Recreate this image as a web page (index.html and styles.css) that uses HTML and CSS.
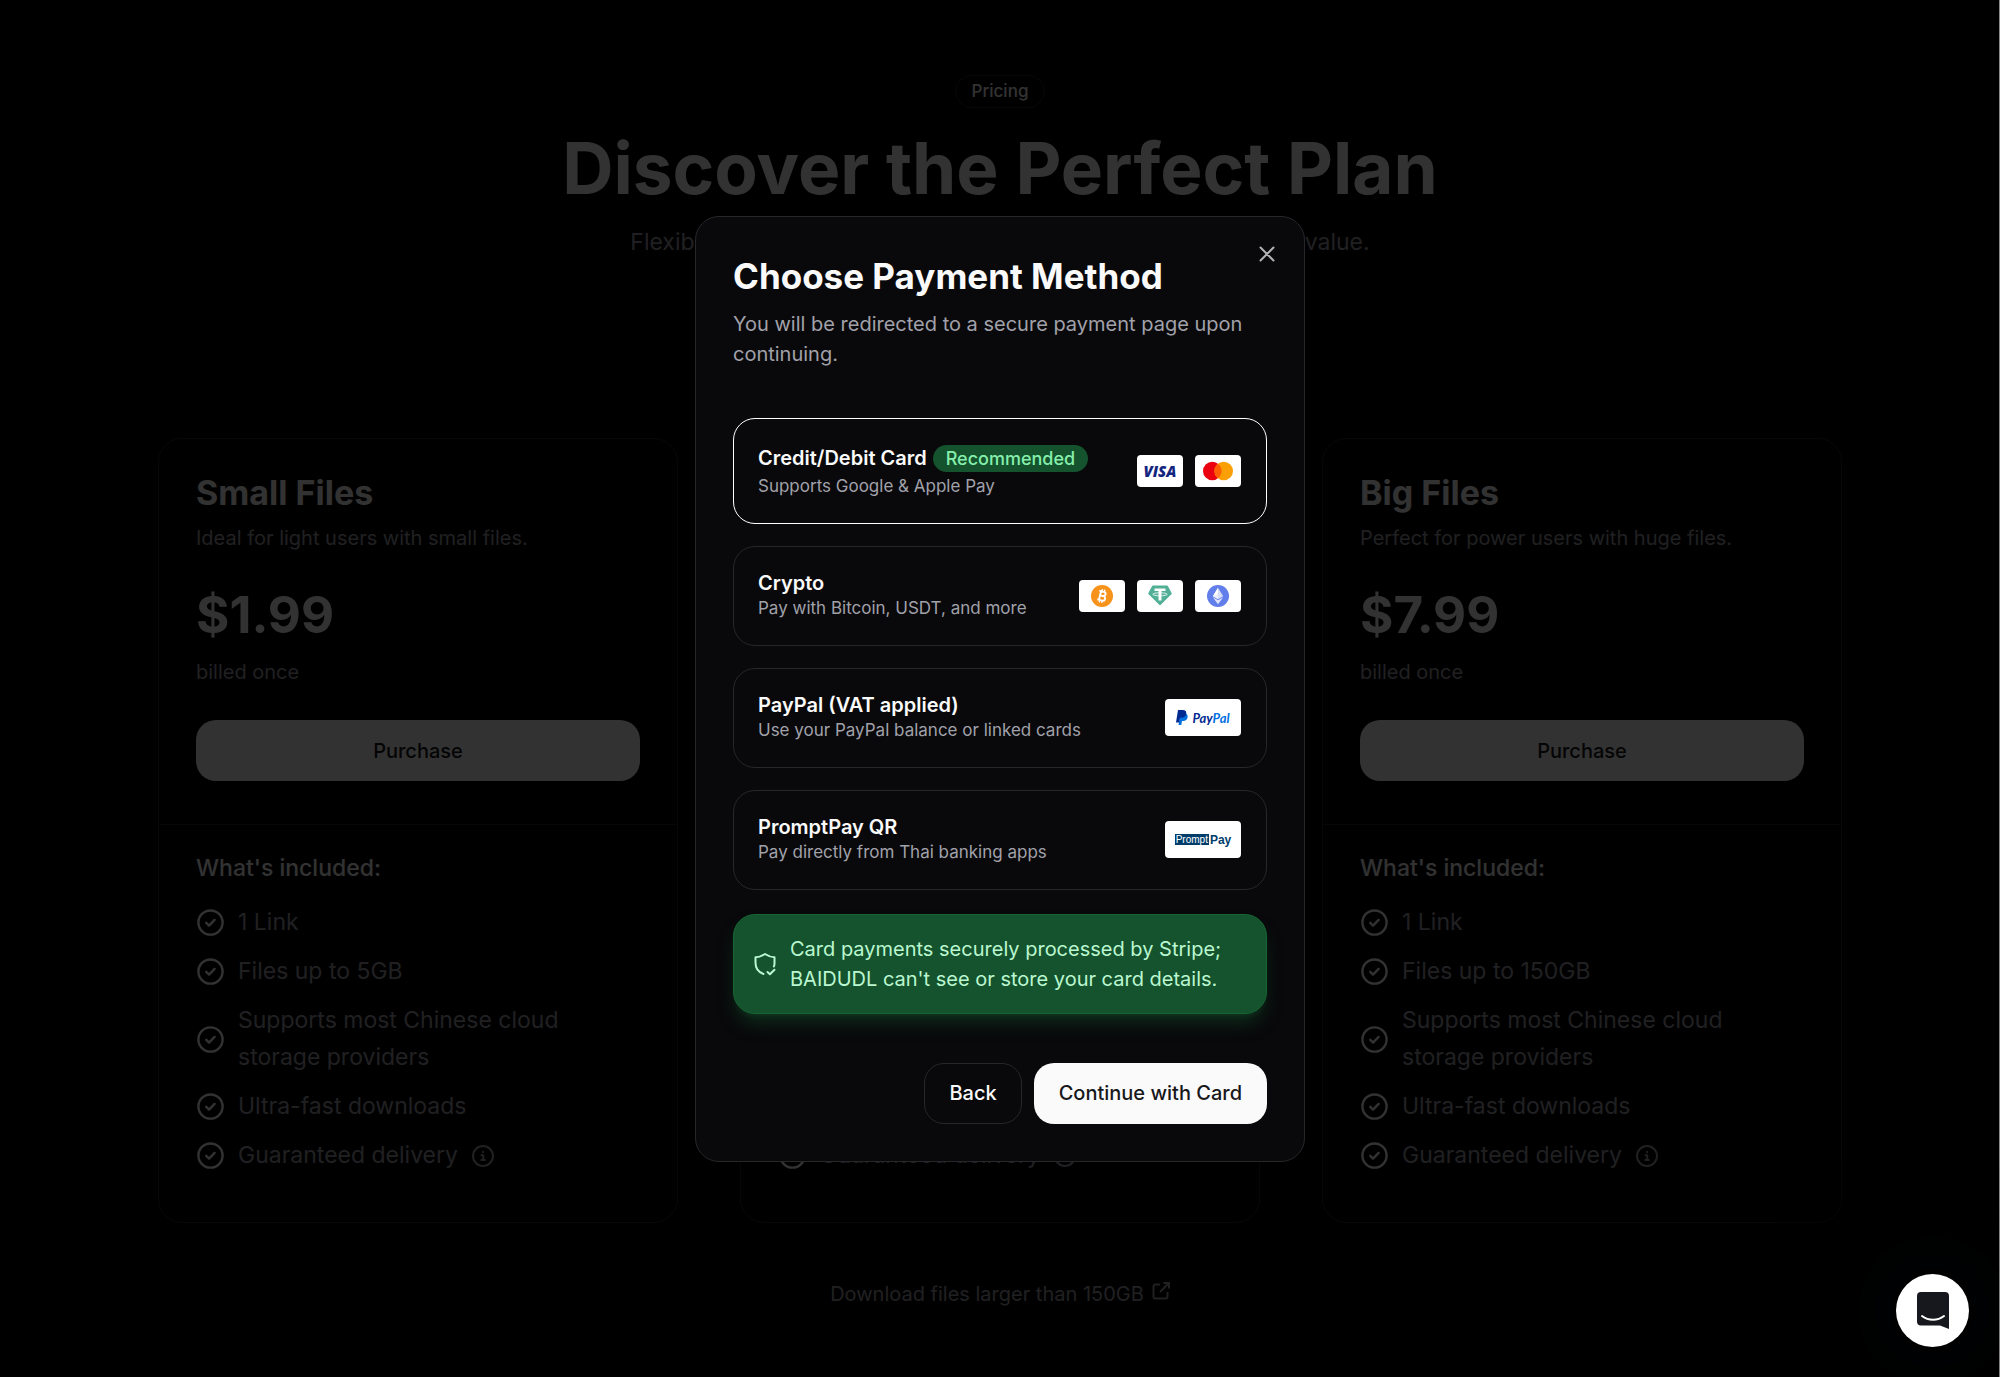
FILE: index.html
```html
<!DOCTYPE html>
<html lang="en">
<head>
  <meta charset="UTF-8"/>
  <meta name="viewport" content="width=device-width, initial-scale=1.0"/>
  <title>BAIDUDL – Pricing</title>
  <link rel="stylesheet" href="styles.css">
</head>

<body>
<!-- Shared icons -->
<svg class="sprite" aria-hidden="true">
  <symbol id="icon-check" viewBox="0 0 24 24">
    <circle cx="12" cy="12" r="10"/>
    <path d="M8.5 12.3l2.3 2.2 4.6-4.6"/>
  </symbol>
  <symbol id="icon-info" viewBox="0 0 24 24">
    <circle cx="12" cy="12" r="10"/>
    <path d="M10.5 11.2h1.7V16M10.3 16h3.6M12 7.8v.4"/>
  </symbol>
</svg>

<main class="pricing">
  <header class="intro">
    <span class="pill">Pricing</span>
    <h1>Discover the Perfect Plan</h1>
    <p>Flexible pricing plans designed to meet your needs with great value.</p>
  </header>

  <div class="plans">
    <section class="plan">
      <div class="plan-top">
        <h2>Small Files</h2>
        <p class="plan-desc">Ideal for light users with small files.</p>
        <p class="price">$1.99</p>
        <p class="billing">billed once</p>
        <button class="btn btn-primary" type="button">Purchase</button>
      </div>
      <div class="plan-features">
        <h3>What's included:</h3>
        <ul>
          <li><svg class="check"><use href="#icon-check"/></svg>1 Link</li>
          <li><svg class="check"><use href="#icon-check"/></svg>Files up to 5GB</li>
          <li><svg class="check"><use href="#icon-check"/></svg>Supports most Chinese cloud storage providers</li>
          <li><svg class="check"><use href="#icon-check"/></svg>Ultra-fast downloads</li>
          <li><svg class="check"><use href="#icon-check"/></svg>Guaranteed delivery<svg class="info"><use href="#icon-info"/></svg></li>
        </ul>
      </div>
    </section>

    <section class="plan">
      <div class="plan-top">
        <h2>Medium Files</h2>
        <p class="plan-desc">Great for regular users.</p>
        <p class="price">$3.99</p>
        <p class="billing">billed once</p>
        <button class="btn btn-primary" type="button">Purchase</button>
      </div>
      <div class="plan-features">
        <h3>What's included:</h3>
        <ul>
          <li><svg class="check"><use href="#icon-check"/></svg>1 Link</li>
          <li><svg class="check"><use href="#icon-check"/></svg>Files up to 50GB</li>
          <li><svg class="check"><use href="#icon-check"/></svg>Supports most Chinese cloud storage providers</li>
          <li><svg class="check"><use href="#icon-check"/></svg>Ultra-fast downloads</li>
          <li><svg class="check"><use href="#icon-check"/></svg>Guaranteed delivery<svg class="info"><use href="#icon-info"/></svg></li>
        </ul>
      </div>
    </section>

    <section class="plan">
      <div class="plan-top">
        <h2>Big Files</h2>
        <p class="plan-desc">Perfect for power users with huge files.</p>
        <p class="price">$7.99</p>
        <p class="billing">billed once</p>
        <button class="btn btn-primary" type="button">Purchase</button>
      </div>
      <div class="plan-features">
        <h3>What's included:</h3>
        <ul>
          <li><svg class="check"><use href="#icon-check"/></svg>1 Link</li>
          <li><svg class="check"><use href="#icon-check"/></svg>Files up to 150GB</li>
          <li><svg class="check"><use href="#icon-check"/></svg>Supports most Chinese cloud storage providers</li>
          <li><svg class="check"><use href="#icon-check"/></svg>Ultra-fast downloads</li>
          <li><svg class="check"><use href="#icon-check"/></svg>Guaranteed delivery<svg class="info"><use href="#icon-info"/></svg></li>
        </ul>
      </div>
    </section>
  </div>

  <a class="larger" href="#">Download files larger than 150GB
    <svg viewBox="0 0 18 18"><path d="M8 2.5H3.5a2 2 0 0 0-2 2v10a2 2 0 0 0 2 2h10a2 2 0 0 0 2-2V10M11.5 1H17v5.500M17 1L8 10"/></svg>
  </a>
</main>

<div class="overlay">
  <form class="modal" role="dialog" aria-modal="true" aria-labelledby="modal-title">
    <button class="close" type="button" aria-label="Close">
      <svg viewBox="0 0 16 16"><path d="M1.500 1.500l13 13M14.500 1.500l-13 13"/></svg>
    </button>

    <h2 id="modal-title">Choose Payment Method</h2>
    <p class="modal-desc">You will be redirected to a secure payment page upon continuing.</p>

    <div class="methods">
      <label class="method">
        <input type="radio" name="method" value="card" checked>
        <span class="method-text">
          <span class="method-name">Credit/Debit Card <span class="tag">Recommended</span></span>
          <span class="method-note">Supports Google &amp; Apple Pay</span>
        </span>
        <span class="logos">
          <span class="logo visa">VISA</span>
          <span class="logo">
            <svg width="30" height="20" viewBox="0 0 30 20">
              <circle cx="9.300" cy="10" r="9.300" fill="#eb0010"/>
              <circle cx="20.700" cy="10" r="9.300" fill="#fa9f05"/>
              <path d="M15 2.650a9.300 9.300 0 0 1 0 14.700a9.300 9.300 0 0 1 0-14.700z" fill="#ff5f00"/>
            </svg>
          </span>
        </span>
      </label>

      <label class="method">
        <input type="radio" name="method" value="crypto">
        <span class="method-text">
          <span class="method-name">Crypto</span>
          <span class="method-note">Pay with Bitcoin, USDT, and more</span>
        </span>
        <span class="logos">
          <span class="logo">
            <svg width="22" height="22" viewBox="0 0 32 32">
              <circle cx="16" cy="16" r="16" fill="#f7931a"/>
              <g transform="rotate(14 16 16)" fill="none" stroke="#fff" stroke-width="2.800">
                <path d="M10.500 9.500h6.800a3.100 3.100 0 0 1 0 6.200h-4.300M13 15.700h5a3.400 3.400 0 0 1 0 6.800h-7.500M13 9.500v13"/>
                <path d="M14.300 6v3.500M17.900 6v3.500M14.300 22.500V26M17.900 22.500V26" stroke-width="2"/>
              </g>
            </svg>
          </span>
          <span class="logo">
            <svg width="24" height="21" viewBox="0 0 24 21">
              <path d="M5 .5h14a1 1 0 0 1 .9.5l3.800 7.200a.8.800 0 0 1-.1.900L12.500 20.100a.7.700 0 0 1-1 0L.4 9.100a.8.800 0 0 1-.1-.900L4.100 1A1 1 0 0 1 5 .5z" fill="#50af95"/>
              <path d="M6.500 3.500h11v2.600h-4v9.500h-3V6.100h-4z" fill="#fff"/>
              <ellipse cx="12" cy="9.300" rx="7.200" ry="1.500" fill="none" stroke="#fff" stroke-width=".8"/>
            </svg>
          </span>
          <span class="logo">
            <svg width="22" height="22" viewBox="0 0 32 32">
              <circle cx="16" cy="16" r="16" fill="#627eea"/>
              <path d="M16 4l-7.500 12.300L16 20.700l7.500-4.400z" fill="#fff" fill-opacity=".75"/>
              <path d="M16 4l-7.500 12.300L16 13z" fill="#fff"/>
              <path d="M16 13l-7.500 3.300L16 20.700z" fill="#fff" fill-opacity=".5"/>
              <path d="M8.500 17.700L16 28l7.500-10.300L16 22.100z" fill="#fff" fill-opacity=".8"/>
            </svg>
          </span>
        </span>
      </label>

      <label class="method">
        <input type="radio" name="method" value="paypal">
        <span class="method-text">
          <span class="method-name">PayPal (VAT applied)</span>
          <span class="method-note">Use your PayPal balance or linked cards</span>
        </span>
        <span class="logos">
          <span class="logo wide paypal">
            <svg width="12" height="15" viewBox="0 0 12 15">
              <path d="M4.600 3.500h5.200c1.600.8 2.200 2.200 1.800 3.900-.5 2.300-2.100 3.500-4.400 3.500H6L5.300 15H2.500z" fill="#0070e0"/>
              <path d="M2 0h4.800C9.400 0 10.700 1.600 10.200 4c-.5 2.500-2.200 3.800-4.700 3.800H4L3.200 12.500H0z" fill="#002991"/>
            </svg>
            <b>Pay<i>Pal</i></b>
          </span>
        </span>
      </label>

      <label class="method">
        <input type="radio" name="method" value="promptpay">
        <span class="method-text">
          <span class="method-name">PromptPay QR</span>
          <span class="method-note">Pay directly from Thai banking apps</span>
        </span>
        <span class="logos">
          <span class="logo wide promptpay"><span>Prompt</span><b>Pay</b></span>
        </span>
      </label>
    </div>

    <div class="notice">
      <svg viewBox="0 0 24 24">
        <path d="M10.500 22C5.500 20.300 2.500 16 2.500 10.800V5.200C6 5.200 9 4 12 2c3 2 6 3.200 9.500 3.200v6c0 1.200-.2 2.300-.6 3.300"/>
        <path d="M14.500 20l2.400 2.300 4.600-4.600"/>
      </svg>
      <p>Card payments securely processed by Stripe; BAIDUDL can't see or store your card details.</p>
    </div>

    <div class="actions">
      <button class="btn btn-outline" type="button">Back</button>
      <button class="btn btn-primary" type="submit">Continue with Card</button>
    </div>
  </form>
</div>

<!-- Chat launcher -->
<button class="chat" type="button" aria-label="Open chat">
  <svg viewBox="0 0 32 37">
    <path d="M4 0h24a4 4 0 0 1 4 4v33l-9-3.500H4a4 4 0 0 1-4-4V4a4 4 0 0 1 4-4z" fill="#16181d"/>
    <path d="M5 24c6.500 5 15.500 5 22 0" fill="none" stroke="#fff" stroke-width="2" stroke-linecap="round"/>
  </svg>
</button>
</body>
</html>
```

FILE: styles.css
```css
* {
    box-sizing: border-box;
}

body {
    margin: 0;
    min-height: 100vh;
    font-family: Inter, "Liberation Sans", sans-serif;
    font-size: 20px;
    line-height: 30px;
    background: #020202;
    color: #fafafa;
}

h1, h2, h3, p, ul {
    margin: 0;
    padding: 0;
}

svg {
    flex-shrink: 0;
}

.sprite {
    position: absolute;
    width: 0;
    height: 0;
}

/* Pricing page */
.pricing {
    max-width: 1780px;
    margin: 0 auto;
    padding: 75px 48px 60px;
    display: flex;
    flex-direction: column;
    align-items: center;
}

.intro {
    display: flex;
    flex-direction: column;
    align-items: center;
    text-align: center;
}

.pill {
    padding: 0 16px;
    border: 1px solid #27272a;
    border-radius: 17px;
    font-size: 17px;
    font-weight: 500;
    line-height: 31px;
}

.intro h1 {
    margin-top: 20px;
    font-size: 71px;
    font-weight: 700;
    line-height: 80px;
}

.intro p {
    margin-top: 16px;
    font-size: 23px;
    line-height: 36px;
    color: #a1a1aa;
}

.plans {
    width: 100%;
    margin-top: 178px;
    display: grid;
    grid-template-columns: repeat(3, 1fr);
    gap: 62px;
}

.plan {
    border: 1px solid #27272a;
    border-radius: 24px;
}

.plan-top {
    display: flex;
    flex-direction: column;
    padding: 37px 37px 43px;
    border-bottom: 1px solid #27272a;
}

.plan h2 {
    font-size: 34px;
    font-weight: 700;
    line-height: 34px;
}

.plan-desc {
    margin-top: 13px;
    color: #a1a1aa;
}

.price {
    margin-top: 34px;
    font-size: 51px;
    font-weight: 700;
    line-height: 56px;
}

.billing {
    margin: 14px 0 33px;
    color: #a1a1aa;
}

.plan-features {
    padding: 28px 37px 48px;
}

.plan h3 {
    font-size: 23px;
    font-weight: 500;
    line-height: 30px;
}

.plan ul {
    display: flex;
    flex-direction: column;
    gap: 12px;
    margin-top: 21px;
    list-style: none;
}

.plan li {
    display: flex;
    align-items: center;
    gap: 13px;
    font-size: 23px;
    line-height: 37px;
    color: #a1a1aa;
}

.check,
.info {
    fill: none;
    stroke: currentColor;
    stroke-width: 2;
    stroke-linecap: round;
    stroke-linejoin: round;
}

.check {
    width: 29px;
    height: 29px;
    color: #fafafa;
}

.info {
    width: 24px;
    height: 24px;
}

.larger {
    display: flex;
    align-items: center;
    gap: 8px;
    margin-top: 56px;
    color: #a1a1aa;
    text-decoration: none;
}

.larger svg {
    width: 18px;
    height: 18px;
    margin-bottom: 6px;
    fill: none;
    stroke: currentColor;
    stroke-width: 2;
}

/* Buttons */
.btn {
    height: 61px;
    padding: 0 24px;
    border: 1px solid transparent;
    border-radius: 20px;
    font: inherit;
    font-weight: 500;
    cursor: pointer;
}

.btn-primary {
    background: #fafafa;
    color: #18181b;
}

.btn-outline {
    background: #09090b;
    border-color: #27272a;
    color: #fafafa;
}

/* Payment modal */
.overlay {
    position: fixed;
    inset: 0;
    display: flex;
    align-items: center;
    justify-content: center;
    background: rgba(0, 0, 0, 0.8);
    box-shadow: inset -1px 0 #8a8a8a;
}

.modal {
    position: relative;
    width: 610px;
    max-width: 100%;
    padding: 37px;
    background: #09090b;
    border: 1px solid #27272a;
    border-radius: 24px;
}

.modal h2 {
    font-size: 35px;
    font-weight: 700;
    line-height: 44px;
}

.modal-desc {
    margin-top: 11px;
    color: #a1a1aa;
}

.close {
    position: absolute;
    top: 24px;
    right: 24px;
    display: flex;
    padding: 5px;
    background: none;
    border: none;
    color: #fafafa;
    opacity: 0.7;
    cursor: pointer;
}

.close svg {
    width: 16px;
    height: 16px;
    stroke: currentColor;
    stroke-width: 2;
    stroke-linecap: round;
}

.methods {
    display: flex;
    flex-direction: column;
    gap: 22px;
    margin-top: 49px;
}

.method {
    display: flex;
    align-items: center;
    justify-content: space-between;
    padding: 24px 25px 24px 24px;
    border: 1px solid #27272a;
    border-radius: 22px;
    cursor: pointer;
}

.method:has(input:checked) {
    border-color: #fff;
}

.method input {
    position: absolute;
    opacity: 0;
}

.method-text {
    display: flex;
    flex-direction: column;
    line-height: 25px;
}

.method-name {
    display: flex;
    align-items: center;
    gap: 6px;
    font-weight: 600;
}

.method-note {
    font-size: 17px;
    color: #a1a1aa;
}

.tag {
    margin: 2px 0;
    padding: 0 13px;
    border-radius: 14px;
    background: #14532d;
    color: #86efac;
    font-size: 18px;
    font-weight: 500;
    line-height: 27px;
}

.logos {
    display: flex;
    gap: 12px;
}

.logo {
    display: flex;
    align-items: center;
    justify-content: center;
    width: 46px;
    height: 32px;
    border-radius: 4px;
    background: #fff;
}

.logo.wide {
    width: 76px;
    height: 37px;
}

.visa {
    color: #14257f;
    font-family: "Open Sans", sans-serif;
    font-size: 15px;
    font-style: italic;
    font-weight: 800;
}

.paypal {
    gap: 4px;
    color: #002991;
    font-family: Lato, sans-serif;
    font-size: 13px;
    font-style: italic;
}

.paypal i {
    color: #0070e0;
}

.promptpay {
    gap: 1px;
    color: #003d6a;
    font-family: "Liberation Sans", sans-serif;
    font-size: 12px;
}

.promptpay span {
    padding: 0 1px;
    background: #003d6a;
    color: #fff;
    font-size: 10px;
    line-height: 11px;
}

.notice {
    display: flex;
    align-items: center;
    gap: 13px;
    margin-top: 24px;
    padding: 19px;
    background: #14532d;
    border: 1px solid #166534;
    border-radius: 22px;
    box-shadow: 0 12px 18px -4px rgba(20, 83, 45, 0.5), 0 5px 7px -5px rgba(20, 83, 45, 0.5);
    color: #bbf7d0;
}

.notice svg {
    width: 24px;
    height: 24px;
    fill: none;
    stroke: currentColor;
    stroke-width: 2;
    stroke-linecap: round;
    stroke-linejoin: round;
}

.actions {
    display: flex;
    justify-content: flex-end;
    gap: 12px;
    margin-top: 49px;
}

/* Chat launcher */
.chat {
    position: fixed;
    right: 31px;
    bottom: 30px;
    display: flex;
    align-items: center;
    justify-content: center;
    width: 73px;
    height: 73px;
    padding: 0;
    border: none;
    border-radius: 50%;
    background: #fff;
    box-shadow: 0 0 120px rgba(9, 14, 21, 0.8);
    cursor: pointer;
}

.chat svg {
    width: 32px;
    height: 37px;
}
```
